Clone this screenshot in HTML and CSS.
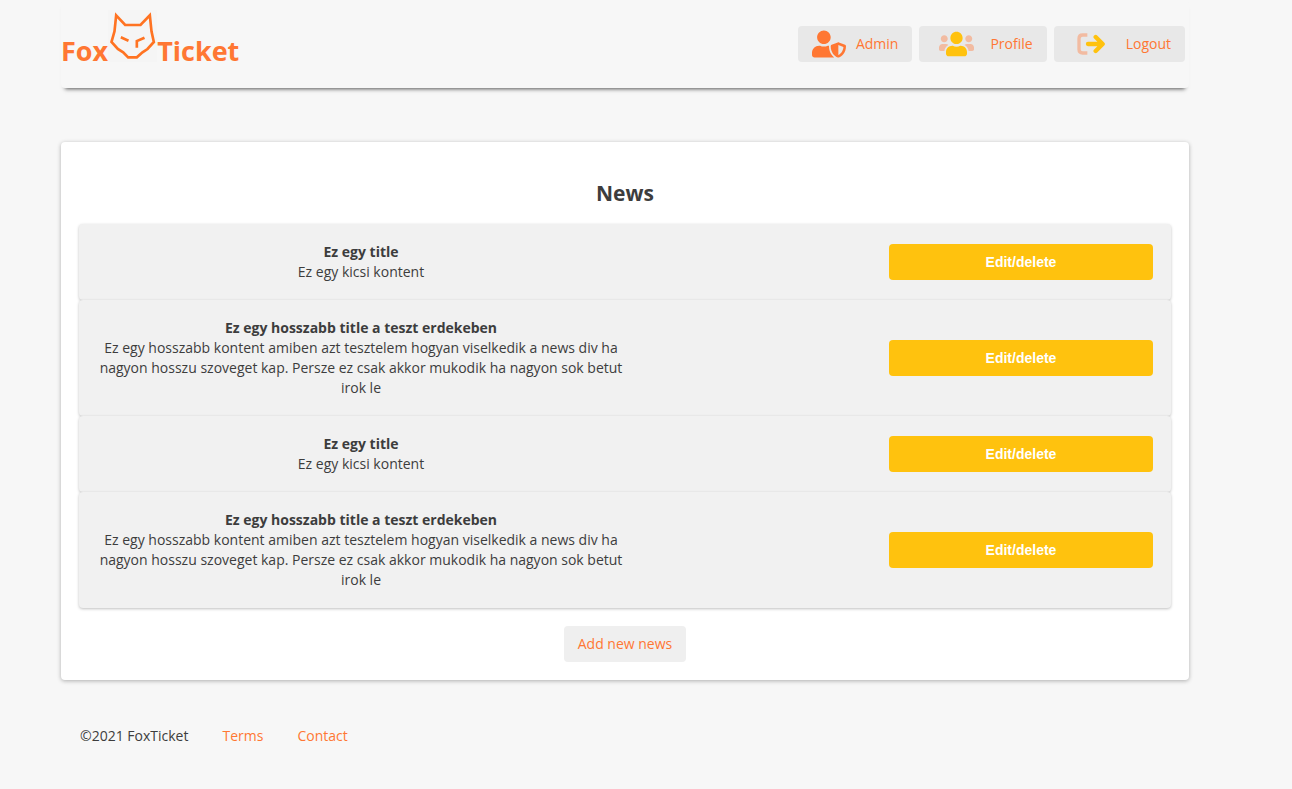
FILE: index.html
```html
<!DOCTYPE html>
<html lang="en">
<head>
<meta charset="utf-8">
<title>FoxTicket</title>
<link rel="stylesheet" href="styles.css">
</head>
<body>
<div class="page">
  <header class="header">
    <a class="logo" href="#">Fox<svg class="logo-mark" viewBox="178 30 146 156" aria-hidden="true">
      <path class="logo-back" d="M178 30h146v156H178z"/>
      <path class="logo-line" d="M202 46L229 75H275L303 46L308 94L315 126L296 147L281 157L264 172H238L223 157L207 147L188 126L197 94Z"/>
      <path class="logo-line" d="M216 112L239 122M287 113L264 123V143"/>
    </svg>Ticket</a>
    <nav class="nav">
      <a class="nav-link" href="#">
        <svg class="icon icon-admin" viewBox="0 0 640 512" aria-hidden="true"><path class="orange" d="M622.3 271.1l-115.2-45c-4.1-1.6-12.6-3.7-22.2 0l-115.2 45c-10.7 4.2-17.7 14-17.7 24.9 0 111.6 68.7 188.8 132.9 213.9 9.6 3.7 18 1.6 22.2 0C558.4 489.9 640 420.5 640 296c0-10.9-7-20.7-17.7-24.9zM496 462.4V273.3l95.5 37.3c-5.6 87.1-60.9 135.4-95.5 151.8zM224 256c70.7 0 128-57.3 128-128S294.7 0 224 0 96 57.3 96 128s57.3 128 128 128zm96 40c0-2.5.8-4.8 1.1-7.2-2.5-.1-4.9-.8-7.5-.8h-16.7c-22.2 10.2-46.9 16-72.9 16s-50.6-5.8-72.9-16h-16.7C60.2 288 0 348.2 0 422.4V464c0 26.5 21.5 48 48 48h352c6.8 0 13.3-1.5 19.2-4-54-42.9-99.2-116.7-99.2-212z"/></svg>
        <span>Admin</span>
      </a>
      <a class="nav-link" href="#">
        <svg class="icon icon-profile" viewBox="0 0 640 512" aria-hidden="true"><path class="faded" d="M96 224c35.3 0 64-28.7 64-64s-28.7-64-64-64-64 28.7-64 64 28.7 64 64 64zm448 0c35.3 0 64-28.7 64-64s-28.7-64-64-64-64 28.7-64 64 28.7 64 64 64zm32 32h-64c-17.6 0-33.5 7.1-45.1 18.6 40.3 22.1 68.9 62 75.1 109.4h66c17.7 0 32-14.3 32-32v-32c0-35.3-28.7-64-64-64zM173.1 274.6C161.5 263.1 145.6 256 128 256H64c-35.3 0-64 28.7-64 64v32c0 17.7 14.3 32 32 32h65.9c6.3-47.4 34.9-87.3 75.2-109.4z"/><path class="yellow" d="M320 256c61.9 0 112-50.1 112-112S381.9 32 320 32 208 82.1 208 144s50.1 112 112 112zm76.8 32h-8.3c-20.8 10-43.9 16-68.5 16s-47.6-6-68.5-16h-8.3C179.6 288 128 339.6 128 403.2V432c0 26.5 21.5 48 48 48h288c26.5 0 48-21.5 48-48v-28.8c0-63.6-51.6-115.2-115.2-115.2z"/></svg>
        <span>Profile</span>
      </a>
      <a class="nav-link" href="#">
        <svg class="icon icon-logout" viewBox="0 0 84 66" aria-hidden="true"><path class="logout-door" d="M31 6H17Q6 6 6 17V49Q6 60 17 60H31"/><path class="logout-arrow" d="M33 33H76M56 12L77 33L56 54"/></svg>
        <span>Logout</span>
      </a>
    </nav>
  </header>

  <main class="card">
    <h1 class="card-title">News</h1>
    <ul class="news">
      <li class="news-item">
        <div class="news-text"><h2 class="news-title">Ez egy title</h2><p class="news-body">Ez egy kicsi kontent</p></div>
        <button class="edit" type="button">Edit/delete</button>
      </li>
      <li class="news-item">
        <div class="news-text"><h2 class="news-title">Ez egy hosszabb title a teszt erdekeben</h2><p class="news-body">Ez egy hosszabb kontent amiben azt tesztelem hogyan viselkedik a news div ha nagyon hosszu szoveget kap. Persze ez csak akkor mukodik ha nagyon sok betut irok le</p></div>
        <button class="edit" type="button">Edit/delete</button>
      </li>
      <li class="news-item">
        <div class="news-text"><h2 class="news-title">Ez egy title</h2><p class="news-body">Ez egy kicsi kontent</p></div>
        <button class="edit" type="button">Edit/delete</button>
      </li>
      <li class="news-item">
        <div class="news-text"><h2 class="news-title">Ez egy hosszabb title a teszt erdekeben</h2><p class="news-body">Ez egy hosszabb kontent amiben azt tesztelem hogyan viselkedik a news div ha nagyon hosszu szoveget kap. Persze ez csak akkor mukodik ha nagyon sok betut irok le</p></div>
        <button class="edit" type="button">Edit/delete</button>
      </li>
    </ul>
    <button class="add" type="button">Add new news</button>
  </main>

  <footer class="footer">
    <span>©2021 FoxTicket</span>
    <a href="#">Terms</a>
    <a href="#">Contact</a>
  </footer>
</div>
</body>
</html>
```
FILE: styles.css
```css
* {
  box-sizing: border-box;
}

body {
  margin: 0;
  background: #f7f7f7;
  color: #3d3d3d;
  font: 14px/20px "Open Sans", "Noto Sans", sans-serif;
}

h1, h2, p, ul {
  margin: 0;
  padding: 0;
}

a {
  color: #ff7733;
  text-decoration: none;
}

.page {
  padding: 0 103px 0 61px;
}

.header {
  display: flex;
  justify-content: space-between;
  align-items: flex-start;
  height: 88px;
  padding: 10px 4px 0 0;
  border-radius: 4px;
  background: #f7f7f7;
  box-shadow: 0 5px 4px -4px #555;
}

.logo {
  display: flex;
  align-items: flex-end;
  font-size: 27px;
  font-weight: 700;
  line-height: 34px;
  height: 58px;
}

.logo-mark {
  width: 49px;
  height: 52px;
  margin-bottom: 6px;
}

.logo-back {
  fill: #f5f5f5;
}

.logo-line {
  fill: none;
  stroke: #ff7322;
  stroke-width: 8;
}

.nav {
  display: flex;
  gap: 7px;
  padding-top: 16px;
}

.nav-link {
  display: flex;
  align-items: center;
  height: 36px;
  padding: 0 14px;
  border-radius: 4px;
  background: #e8e8e8;
}

.icon {
  height: 28px;
}

.icon-admin {
  width: 34px;
  margin-right: 10px;
}

.icon-profile {
  width: 35px;
  margin: 0 16px 0 6px;
}

.icon-logout {
  width: 28px;
  height: 22px;
  margin: 0 21px 0 9px;
}

.orange {
  fill: #ff7733;
}

.yellow {
  fill: #ffc20e;
}

.faded {
  fill: #f2bba1;
}

.logout-door,
.logout-arrow {
  fill: none;
  stroke: #f2bba1;
  stroke-width: 10;
  stroke-linejoin: round;
}

.logout-arrow {
  stroke: #ffc20e;
  stroke-width: 13;
  stroke-linecap: round;
}

.card {
  display: flex;
  flex-direction: column;
  align-items: center;
  margin-top: 54px;
  padding: 36px 18px 18px;
  border-radius: 4px;
  background: #fff;
  box-shadow: 0 1px 4px rgba(0, 0, 0, 0.3);
}

.card-title {
  margin-bottom: 16px;
  font-size: 21px;
  line-height: 30px;
}

.news {
  align-self: stretch;
  list-style: none;
}

.news-item {
  display: flex;
  align-items: center;
  justify-content: space-between;
  padding: 18px;
  border-radius: 4px;
  background: #f1f1f1;
  box-shadow: 0 1px 3px rgba(0, 0, 0, 0.25);
}

.news-text {
  width: 50%;
  text-align: center;
}

.news-title {
  font-size: 14px;
  line-height: 20px;
}

.edit,
.add {
  height: 36px;
  border: 0;
  border-radius: 4px;
}

.edit {
  width: 25%;
  background: #ffc20e;
  color: #fff;
  font: 700 14px/20px "Liberation Sans", Arial, sans-serif;
}

.add {
  margin-top: 18px;
  padding: 0 14px;
  background: #efefef;
  color: #ff7733;
  font: inherit;
}

.footer {
  display: flex;
  gap: 34px;
  padding: 46px 19px;
}
```
